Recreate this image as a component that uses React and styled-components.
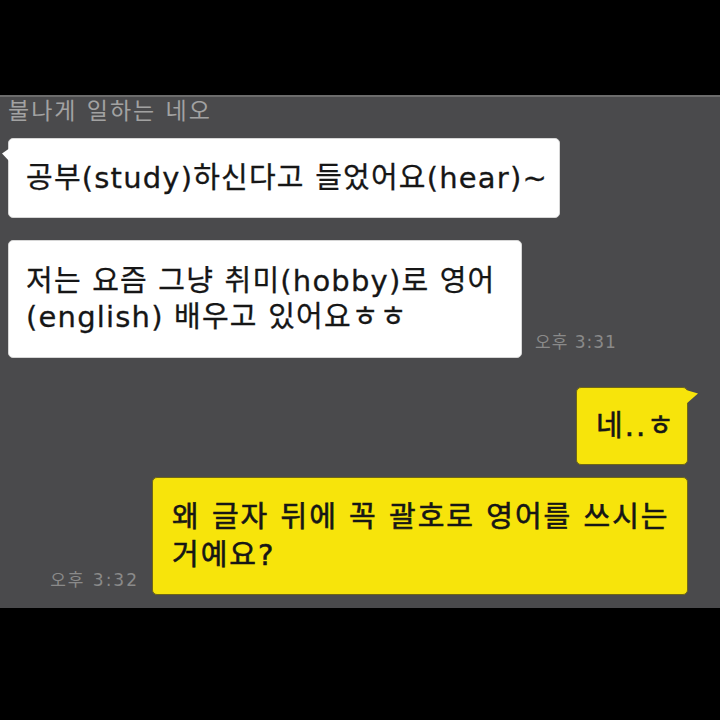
import styled, { createGlobalStyle } from 'styled-components';

const GlobalStyle = createGlobalStyle`
    html, body {
        margin: 0;
        padding: 0;
        background: #000;
    }
    * {
        box-sizing: border-box;
    }
`;

const Screen = styled.div`
    width: 720px;
    height: 720px;
    display: flex;
    flex-direction: column;
    background: #000;
    font-family: "DejaVu Sans", "Noto Sans CJK KR", sans-serif;
`;

const BlackBar = styled.div`
    height: ${(p) => p.$height}px;
    background: #000;
    flex-shrink: 0;
`;

const ChatArea = styled.div`
    height: 513px;
    background: #4a4a4c;
    border-top: 2px solid #6c6c6c;
    padding: 0 32px 0 8px;
    display: flex;
    flex-direction: column;
`;

const Sender = styled.div`
    margin-top: 0;
    font-size: 23px;
    line-height: 28px;
    color: #a2a2a2;
    letter-spacing: 2px;
`;

const Row = styled.div`
    display: flex;
    align-items: flex-end;
    justify-content: ${(p) => (p.$mine ? 'flex-end' : 'flex-start')};
    margin-top: ${(p) => p.$top}px;
`;

const Bubble = styled.div`
    position: relative;
    width: ${(p) => p.$width}px;
    padding: ${(p) => p.$padY}px 8px ${(p) => p.$padY}px ${(p) => (p.$mine ? 19 : 17)}px;
    background: ${(p) => (p.$mine ? '#f7e40b' : '#ffffff')};
    border: 1px solid ${(p) => (p.$mine ? '#6f6716' : '#d6d6d6')};
    border-radius: 5px;
    color: #161616;
    font-size: 29px;
    line-height: ${(p) => p.$line}px;
    letter-spacing: ${(p) => (p.$mine ? 2 : 1.2)}px;
    -webkit-text-stroke: ${(p) => (p.$mine ? 0.6 : 0.3)}px #161616;
    white-space: nowrap;

    &::after {
        content: ${(p) => (p.$tail ? "''" : 'none')};
        position: absolute;
        top: ${(p) => (p.$mine ? 2 : 9)}px;
        ${(p) => (p.$mine ? 'right: -11px;' : 'left: -7px;')}
        width: ${(p) => (p.$mine ? 12 : 8)}px;
        height: 14px;
        background: ${(p) => (p.$mine ? '#f7e40b' : '#ffffff')};
        clip-path: ${(p) =>
            p.$mine
                ? 'polygon(0 0, 100% 25%, 0 100%)'
                : 'polygon(100% 0, 0 40%, 100% 100%)'};
    }
`;

const Time = styled.span`
    font-size: 17px;
    line-height: 20px;
    letter-spacing: ${(p) => (p.$mine ? 2 : 1)}px;
    color: #8a8a8a;
    white-space: nowrap;
    margin: 0 ${(p) => (p.$mine ? 13 : 0)}px ${(p) => p.$bottom}px ${(p) => (p.$mine ? 0 : 13)}px;
`;

function App() {
    return (
        <Screen>
            <GlobalStyle />
            <BlackBar $height={95} />
            <ChatArea>
                <Sender>불나게 일하는 네오</Sender>
                <Row $top={13}>
                    <Bubble $width={552} $padY={21} $line={36} $tail>
                        공부(study)하신다고 들었어요(hear)~
                    </Bubble>
                </Row>
                <Row $top={22}>
                    <Bubble $width={514} $padY={22} $line={36}>
                        저는 요즘 그냥 취미(hobby)로 영어
                        <br />
                        (english) 배우고 있어요ㅎㅎ
                    </Bubble>
                    <Time $bottom={6}>오후 3:31</Time>
                </Row>
                <Row $mine $top={29}>
                    <Bubble $mine $width={112} $padY={20} $line={36} $tail>
                        네..ㅎ
                    </Bubble>
                </Row>
                <Row $mine $top={12}>
                    <Time $mine $bottom={5}>오후 3:32</Time>
                    <Bubble $mine $width={536} $padY={20} $line={38}>
                        왜 글자 뒤에 꼭 괄호로 영어를 쓰시는
                        <br />
                        거예요?
                    </Bubble>
                </Row>
            </ChatArea>
            <BlackBar $height={112} />
        </Screen>
    );
}

export default App;
